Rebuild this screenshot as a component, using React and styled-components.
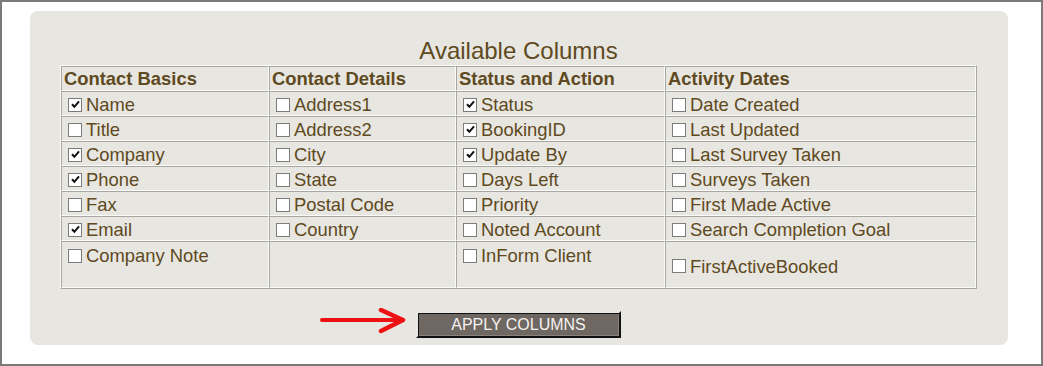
import React from 'react'
import styled, { createGlobalStyle } from 'styled-components'

const GlobalStyle = createGlobalStyle`
  body {
    margin: 0;
    background: #ffffff;
    font-family: 'Liberation Sans', Arial, sans-serif;
  }
`

const columns = [
  {
    title: 'Contact Basics',
    items: [
      ['Name', true],
      ['Title', false],
      ['Company', true],
      ['Phone', true],
      ['Fax', false],
      ['Email', true],
      ['Company Note', false],
    ],
  },
  {
    title: 'Contact Details',
    items: [
      ['Address1', false],
      ['Address2', false],
      ['City', false],
      ['State', false],
      ['Postal Code', false],
      ['Country', false],
      null,
    ],
  },
  {
    title: 'Status and Action',
    items: [
      ['Status', true],
      ['BookingID', true],
      ['Update By', true],
      ['Days Left', false],
      ['Priority', false],
      ['Noted Account', false],
      ['InForm Client', false],
    ],
  },
  {
    title: 'Activity Dates',
    items: [
      ['Date Created', false],
      ['Last Updated', false],
      ['Last Survey Taken', false],
      ['Surveys Taken', false],
      ['First Made Active', false],
      ['Search Completion Goal', false],
      ['FirstActiveBooked', false],
    ],
  },
]

const widths = [208, 187, 209, 311]

const Check = ({ checked }) => (
  <Box>
    {checked && (
      <svg width="9" height="9" viewBox="0 0 9 9">
        <path d="M1 4.2 L3.4 6.8 L8 1.3" fill="none" stroke="#111" strokeWidth="2" />
      </svg>
    )}
  </Box>
)

const Arrow = () => (
  <ArrowMark width="86" height="26" viewBox="0 0 86 26">
    <line x1="2" y1="12" x2="80" y2="12" stroke="#ee1111" strokeWidth="4" strokeLinecap="round" />
    <polyline
      points="61,2 83,12 61,23"
      fill="none"
      stroke="#ee1111"
      strokeWidth="4.5"
      strokeLinecap="round"
      strokeLinejoin="round"
    />
  </ArrowMark>
)

const App = () => {
  const rows = [0, 1, 2, 3, 4, 5, 6]
  return (
    <>
      <GlobalStyle />
      <Frame>
        <Panel>
          <Title>Available Columns</Title>
          <Table>
            <colgroup>
              {widths.map((w, i) => (
                <col key={i} style={{ width: w }} />
              ))}
            </colgroup>
            <tbody>
              <tr>
                {columns.map((c) => (
                  <HeadCell key={c.title}>{c.title}</HeadCell>
                ))}
              </tr>
              {rows.map((r) => (
                <Row key={r} $tall={r === 6}>
                  {columns.map((c, ci) => {
                    const item = c.items[r]
                    return (
                      <Cell key={ci} $middle={r === 6 && ci === 3} $loose={r === 6}>
                        {item && (
                          <Option>
                            <Check checked={item[1]} />
                            {item[0]}
                          </Option>
                        )}
                      </Cell>
                    )
                  })}
                </Row>
              ))}
            </tbody>
          </Table>
          <Actions>
            <ButtonWrap>
              <Arrow />
              <ApplyButton>APPLY COLUMNS</ApplyButton>
            </ButtonWrap>
          </Actions>
        </Panel>
      </Frame>
    </>
  )
}

const Frame = styled.div`
  width: 1043px;
  height: 366px;
  box-sizing: border-box;
  border: 2px solid #7a7a7a;
  padding: 9px 0 0 28px;
`

const Panel = styled.div`
  width: 978px;
  height: 334px;
  box-sizing: border-box;
  background: #e8e6e1;
  border-radius: 8px;
  padding: 27px 31px 0 30px;
  display: flex;
  flex-direction: column;
  align-items: stretch;
`

const Title = styled.div`
  text-align: center;
  font-size: 24px;
  line-height: 26px;
  color: #5e4a1e;
  margin-bottom: 1px;
`

const Table = styled.table`
  width: 917px;
  table-layout: fixed;
  border-collapse: separate;
  border-spacing: 0;
  border: 1px solid;
  border-color: #fbfbfa #a8a6a3 #a8a6a3 #fbfbfa;
  color: #5e4a1e;
  font-size: 18.4px;
`

const Row = styled.tr`
  height: ${(p) => (p.$tall ? '47px' : '25px')};
`

const Cell = styled.td`
  box-sizing: border-box;
  border: 1px solid;
  border-color: #a8a6a3 #fbfbfa #fbfbfa #a8a6a3;
  padding: ${(p) => (p.$loose ? '3px 2px 0' : '2px 2px 0')};
  line-height: 21px;
  vertical-align: ${(p) => (p.$middle ? 'middle' : 'top')};
  white-space: nowrap;
`

const HeadCell = styled(Cell)`
  font-weight: bold;
  height: 25px;
  padding-top: 1px;
`

const Option = styled.label`
  display: flex;
  align-items: center;
  height: 21px;
`

const Box = styled.span`
  width: 14px;
  height: 14px;
  box-sizing: border-box;
  margin: 0 4px 0 4px;
  background: #ffffff;
  border: 1px solid #7c7c7c;
  display: flex;
  align-items: center;
  justify-content: center;
  flex-shrink: 0;
`

const Actions = styled.div`
  display: flex;
  justify-content: center;
  margin-top: 22px;
`

const ButtonWrap = styled.div`
  position: relative;
`

const ArrowMark = styled.svg`
  position: absolute;
  right: calc(100% + 10px);
  top: -3px;
`

const ApplyButton = styled.button`
  width: 205px;
  height: 27px;
  box-sizing: border-box;
  background: #6f6762;
  color: #f4f2ef;
  font-family: 'Liberation Sans', Arial, sans-serif;
  font-size: 16px;
  padding: 0;
  border: 2px solid;
  border-color: #e9e7e3 #111111 #111111 #e9e7e3;
  box-shadow: inset 1px 1px 0 #111111, inset -1px -1px 0 #8a827d;
  cursor: pointer;
`

export default App
